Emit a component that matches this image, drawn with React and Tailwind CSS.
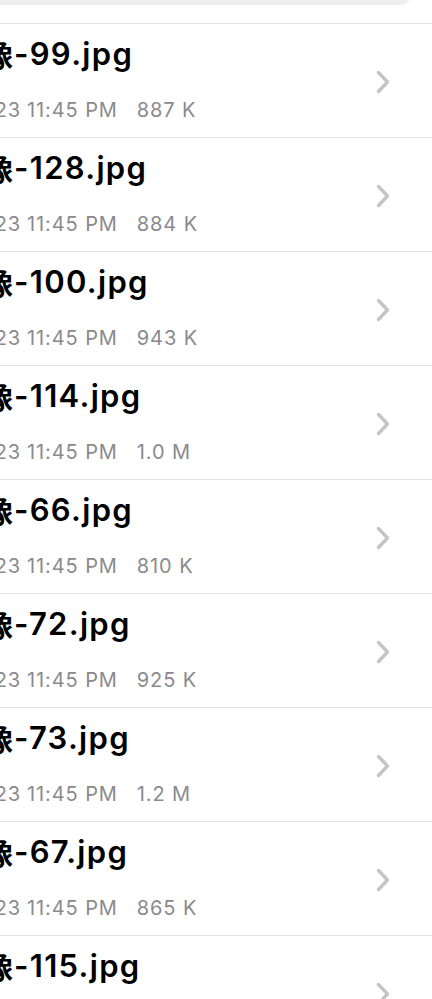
import React from "react";

const files = [
  { num: "99", size: "887 K" },
  { num: "128", size: "884 K" },
  { num: "100", size: "943 K" },
  { num: "114", size: "1.0 M" },
  { num: "66", size: "810 K" },
  { num: "72", size: "925 K" },
  { num: "73", size: "1.2 M" },
  { num: "67", size: "865 K" },
  { num: "115", size: "902 K" },
];

const Chevron = () => (
  <svg width="14" height="24" viewBox="0 0 14 24" fill="none">
    <polyline
      points="2.5,2.5 11.5,12 2.5,21.5"
      stroke="#c4c4c7"
      strokeWidth="3.3"
      strokeLinecap="round"
      strokeLinejoin="round"
    />
  </svg>
);

const FileRow = ({ file }) => (
  <div className="flex border-t border-[#e2e2e4] h-[114px]">
    <div className="flex-1 min-w-0 overflow-hidden">
      {/* name, the start of it runs off the left edge */}
      <div
        className="flex ml-[-100px] mt-[10px] whitespace-nowrap text-[31px] leading-[40px] font-semibold tracking-[1.3px] text-black"
        style={{ fontFamily: "Inter, 'Noto Sans CJK JP', sans-serif" }}
      >
        <span
          className="w-[113px] shrink-0 text-right font-bold tracking-normal"
          style={{ fontFamily: "'Noto Sans CJK JP', sans-serif" }}
        >
          画像
        </span>
        <span className="ml-[1px]">-{file.num}.jpg</span>
      </div>
      {/* date and size */}
      <div
        className="flex ml-[-100px] mt-[24px] whitespace-nowrap text-[20px] leading-[24px] tracking-[0.9px] text-[#8a8a8e]"
        style={{ fontFamily: "Inter, sans-serif" }}
      >
        <span className="w-[121px] shrink-0 text-right">10/11/23</span>
        <span className="ml-[6px]">11:45 PM</span>
        <span className="ml-[19px]">{file.size}</span>
      </div>
    </div>
    <div className="self-center pr-[42px] pl-2 mt-[2px] flex items-center">
      <Chevron />
    </div>
  </div>
);

export default function App() {
  return (
    <div className="h-[999px] w-[432px] overflow-hidden bg-white">
      {/* search field, only its lower edge shows */}
      <div className="h-[23px] overflow-hidden">
        <div className="ml-[-20px] mr-[20px] mt-[-35px] h-[40px] rounded-[12px] bg-[#eeeeef]" />
      </div>
      {files.map((file) => (
        <FileRow key={file.num} file={file} />
      ))}
    </div>
  );
}
